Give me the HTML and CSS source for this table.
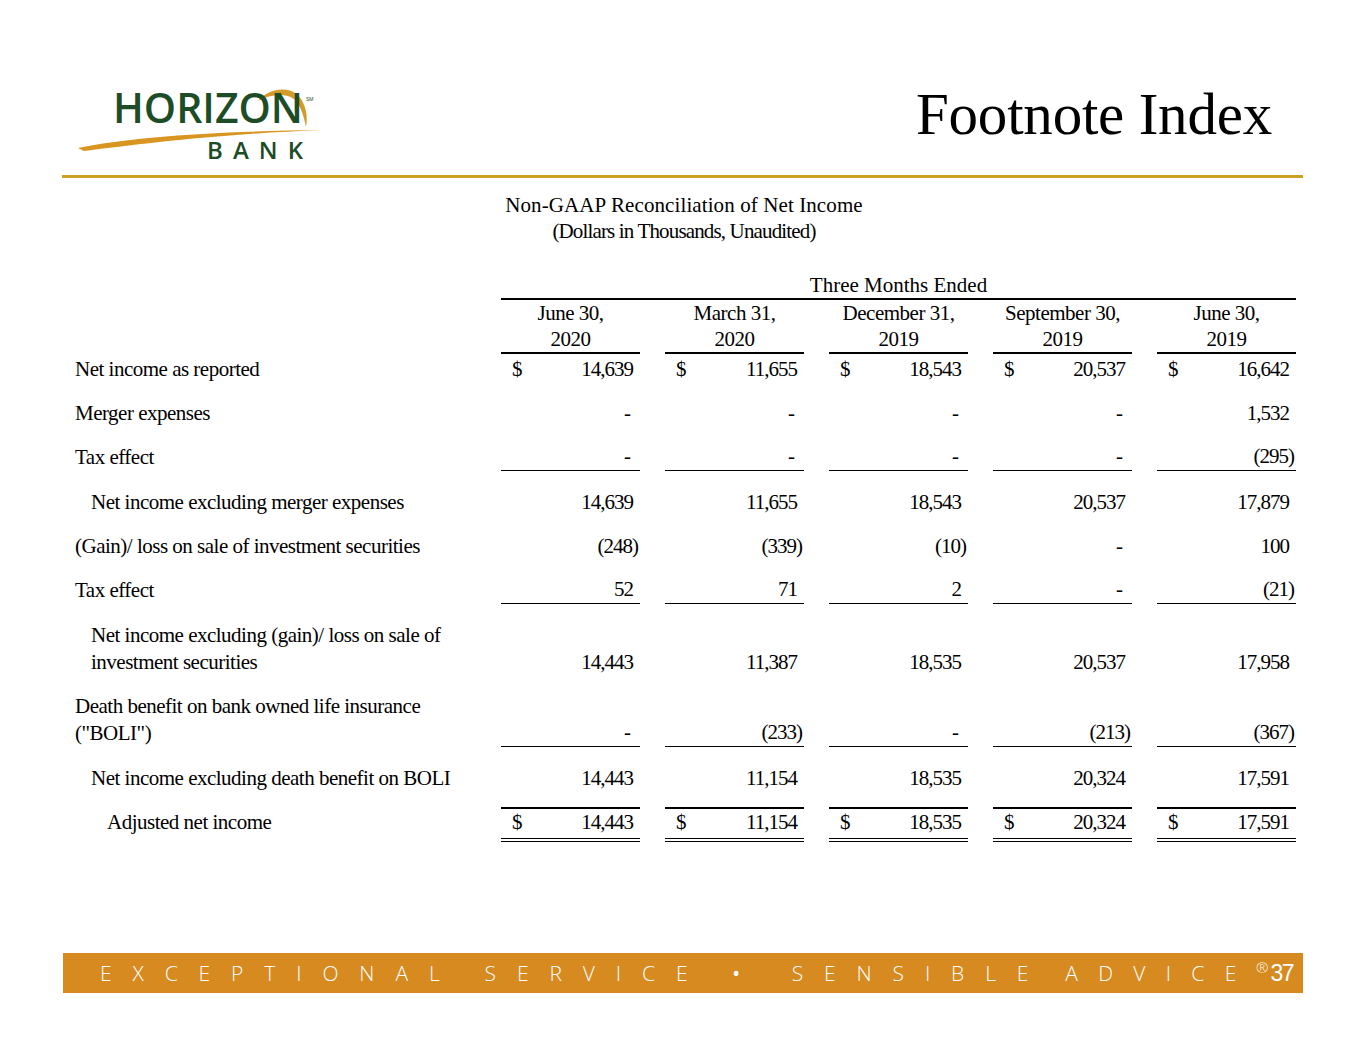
FILE: index.html
```html
<!DOCTYPE html>
<html lang="en">
<head>
<meta charset="utf-8">
<title>Footnote Index</title>
<link rel="stylesheet" href="styles.css">
</head>
<body>
<div class="slide">
  <header class="top">
    <div class="logo">
      <svg width="260" height="90" viewBox="72 76 260 90" aria-label="Horizon Bank">
        <path class="arc" d="M258,101 C268,88 292,84 301,99 C306,107 308,116 306,127 C304,117 301,107 296,101 C289,93 272,93 258,101 Z"/>
        <text x="113" y="123" class="lg-word" textLength="190" lengthAdjust="spacingAndGlyphs">HORIZON</text>
        <text x="306" y="101" class="lg-sm">SM</text>
        <path class="swoosh" d="M78,148 C130,137 220,131 322,130 C220,134 140,144 84,151 Z"/>
        <text x="207" y="159" class="lg-bank" textLength="96" lengthAdjust="spacing">BANK</text>
      </svg>
    </div>
    <h1 class="title">Footnote Index</h1>
  </header>
  <div class="rule"></div>

  <section class="report">
    <div class="caption">
      <div class="cap1">Non-GAAP Reconciliation of Net Income</div>
      <div class="cap2">(Dollars in Thousands, Unaudited)</div>
    </div>

    <div class="row hdr">
      <div class="span">Three Months Ended</div>
    </div>
    <div class="row dates">
      <div></div>
      <div class="d">June 30,<br>2020</div>
      <div class="d">March 31,<br>2020</div>
      <div class="d">December 31,<br>2019</div>
      <div class="d">September 30,<br>2019</div>
      <div class="d">June 30,<br>2019</div>
    </div>

    <div class="row first">
      <div class="lab">Net income as reported</div>
      <div class="v"><span class="cur">$</span><span class="n">14,639</span></div>
      <div class="v"><span class="cur">$</span><span class="n">11,655</span></div>
      <div class="v"><span class="cur">$</span><span class="n">18,543</span></div>
      <div class="v"><span class="cur">$</span><span class="n">20,537</span></div>
      <div class="v"><span class="cur">$</span><span class="n">16,642</span></div>
    </div>

    <div class="row">
      <div class="lab">Merger expenses</div>
      <div class="v"><span class="n dash">-</span></div>
      <div class="v"><span class="n dash">-</span></div>
      <div class="v"><span class="n dash">-</span></div>
      <div class="v"><span class="n dash">-</span></div>
      <div class="v"><span class="n">1,532</span></div>
    </div>

    <div class="row">
      <div class="lab">Tax effect</div>
      <div class="v u"><span class="n dash">-</span></div>
      <div class="v u"><span class="n dash">-</span></div>
      <div class="v u"><span class="n dash">-</span></div>
      <div class="v u"><span class="n dash">-</span></div>
      <div class="v u"><span class="n neg">(295)</span></div>
    </div>

    <div class="row">
      <div class="lab i1">Net income excluding merger expenses</div>
      <div class="v"><span class="n">14,639</span></div>
      <div class="v"><span class="n">11,655</span></div>
      <div class="v"><span class="n">18,543</span></div>
      <div class="v"><span class="n">20,537</span></div>
      <div class="v"><span class="n">17,879</span></div>
    </div>

    <div class="row">
      <div class="lab">(Gain)/ loss on sale of investment securities</div>
      <div class="v"><span class="n neg">(248)</span></div>
      <div class="v"><span class="n neg">(339)</span></div>
      <div class="v"><span class="n neg">(10)</span></div>
      <div class="v"><span class="n dash">-</span></div>
      <div class="v"><span class="n">100</span></div>
    </div>

    <div class="row">
      <div class="lab">Tax effect</div>
      <div class="v u"><span class="n">52</span></div>
      <div class="v u"><span class="n">71</span></div>
      <div class="v u"><span class="n">2</span></div>
      <div class="v u"><span class="n dash">-</span></div>
      <div class="v u"><span class="n neg">(21)</span></div>
    </div>

    <div class="row">
      <div class="lab i1">Net income excluding (gain)/ loss on sale of<br>investment securities</div>
      <div class="v"><span class="n">14,443</span></div>
      <div class="v"><span class="n">11,387</span></div>
      <div class="v"><span class="n">18,535</span></div>
      <div class="v"><span class="n">20,537</span></div>
      <div class="v"><span class="n">17,958</span></div>
    </div>

    <div class="row">
      <div class="lab">Death benefit on bank owned life insurance<br>("BOLI")</div>
      <div class="v u"><span class="n dash">-</span></div>
      <div class="v u"><span class="n neg">(233)</span></div>
      <div class="v u"><span class="n dash">-</span></div>
      <div class="v u"><span class="n neg">(213)</span></div>
      <div class="v u"><span class="n neg">(367)</span></div>
    </div>

    <div class="row pre-total">
      <div class="lab i1">Net income excluding death benefit on BOLI</div>
      <div class="v"><span class="n">14,443</span></div>
      <div class="v"><span class="n">11,154</span></div>
      <div class="v"><span class="n">18,535</span></div>
      <div class="v"><span class="n">20,324</span></div>
      <div class="v"><span class="n">17,591</span></div>
    </div>

    <div class="row total">
      <div class="lab i2">Adjusted net income</div>
      <div class="v t"><span class="cur">$</span><span class="n">14,443</span></div>
      <div class="v t"><span class="cur">$</span><span class="n">11,154</span></div>
      <div class="v t"><span class="cur">$</span><span class="n">18,535</span></div>
      <div class="v t"><span class="cur">$</span><span class="n">20,324</span></div>
      <div class="v t"><span class="cur">$</span><span class="n">17,591</span></div>
    </div>
  </section>

  <footer class="tagline">
    <div class="motto">
      <span class="w">EXCEPTIONAL</span>
      <span class="w">SERVICE</span>
      <span class="w dot">&#8226;</span>
      <span class="w">SENSIBLE</span>
      <span class="w last">ADVIC<span class="tail">E</span></span>
    </div>
    <span class="pg"><span class="reg">&#174;</span><span class="num">37</span></span>
  </footer>
</div>
</body>
</html>
```

FILE: styles.css
```css
html, body {
  margin: 0;
  padding: 0;
  background: #ffffff;
}

body {
  font-family: "Liberation Serif", "Times New Roman", serif;
  color: #000000;
}

.slide {
  width: 1365px;
  height: 1055px;
  overflow: hidden;
}

/* ---------- header ---------- */
.top {
  height: 175px;
  box-sizing: border-box;
  padding: 76px 93px 0 72px;
  display: flex;
  justify-content: space-between;
  align-items: flex-start;
}

.logo svg {
  display: block;
  overflow: visible;
}

.arc {
  fill: #d49a2a;
}

.swoosh {
  fill: #d8951f;
}

.lg-word {
  font-family: "Open Sans", "Liberation Sans", sans-serif;
  font-weight: 600;
  font-size: 42px;
  fill: #1c4d27;
}

.lg-sm {
  font-family: "Liberation Sans", sans-serif;
  font-size: 5px;
  fill: #1c4d27;
}

.lg-bank {
  font-family: "Open Sans", "Liberation Sans", sans-serif;
  font-weight: 600;
  font-size: 24px;
  fill: #1c4d27;
}

.title {
  margin: 8px 0 0;
  font-weight: normal;
  font-size: 59px;
  line-height: 60px;
  letter-spacing: -0.2px;
  color: #000;
}

.rule {
  height: 3px;
  margin: 0 62px;
  background: #c9a224;
}

/* ---------- report table ---------- */
.report {
  margin: 0 62px;
  font-size: 21px;
  letter-spacing: -0.5px;
}

.caption {
  margin: 14px 0 0 439px;
  width: 366px;
  text-align: center;
  line-height: 26px;
}

.cap1 {
  letter-spacing: 0.1px;
  white-space: nowrap;
}

.cap2 {
  letter-spacing: -0.85px;
}

.row {
  display: grid;
  grid-template-columns: 414px repeat(5, 139px);
  column-gap: 25px;
  align-items: end;
  line-height: 27px;
  margin-bottom: 17.4px;
}

.hdr {
  margin-top: 28px;
  margin-bottom: 0;
  line-height: 26px;
}

.hdr .span {
  grid-column: 2 / 7;
  text-align: center;
  border-bottom: 2px solid #000;
  letter-spacing: 0;
}

.dates {
  margin-bottom: 0;
  line-height: 26px;
}

.dates .d {
  text-align: center;
  border-bottom: 2px solid #000;
}

.first {
  margin-top: 1.5px;
}

.lab {
  padding-left: 13px;
}

.lab.i1 {
  padding-left: 29px;
}

.lab.i2 {
  padding-left: 45px;
}

.v {
  display: flex;
  align-items: flex-end;
  padding: 0 7px 0 11px;
  height: 27px;
  box-sizing: border-box;
  letter-spacing: -1px;
}

.v.u {
  border-bottom: 1px solid #000;
}

.cur {
  letter-spacing: 0;
}

.n {
  margin-left: auto;
}

.n.neg {
  margin-right: -5px;
}

.n.dash {
  margin-right: 3px;
}

.pre-total {
  margin-bottom: 15.5px;
}

.total {
  margin-bottom: 0;
  align-items: start;
}

.total .lab {
  padding-top: 2px;
}

.v.t {
  height: auto;
  border-top: 2px solid #000;
  border-bottom: 4px double #000;
  padding-bottom: 2px;
}

/* ---------- footer ---------- */
.tagline {
  margin: 111px 62px 0 63px;
  height: 40px;
  background: #d68a1f;
  display: flex;
  align-items: center;
  justify-content: space-between;
  padding: 0 10px 0 37px;
  color: #ffffff;
  font-family: "Open Sans", "Liberation Sans", sans-serif;
  font-weight: 300;
}

.motto {
  display: flex;
  align-items: center;
  gap: 24px;
  font-size: 21px;
  letter-spacing: 20.9px;
}

.motto .dot {
  font-size: 30px;
  line-height: 20px;
  margin-left: -2px;
  margin-right: 5px;
}

.motto .last {
  margin-left: -8px;
  letter-spacing: 20.3px;
}

.motto .tail {
  letter-spacing: 0;
}

.pg {
  display: flex;
  align-items: flex-start;
  letter-spacing: 0;
}

.reg {
  font-size: 15px;
  line-height: 15px;
  margin-right: 2px;
  margin-top: -1px;
}

.num {
  font-family: "Liberation Sans", "Arial", sans-serif;
  font-weight: normal;
  font-size: 23px;
  line-height: 24px;
  letter-spacing: -1.5px;
}
```
